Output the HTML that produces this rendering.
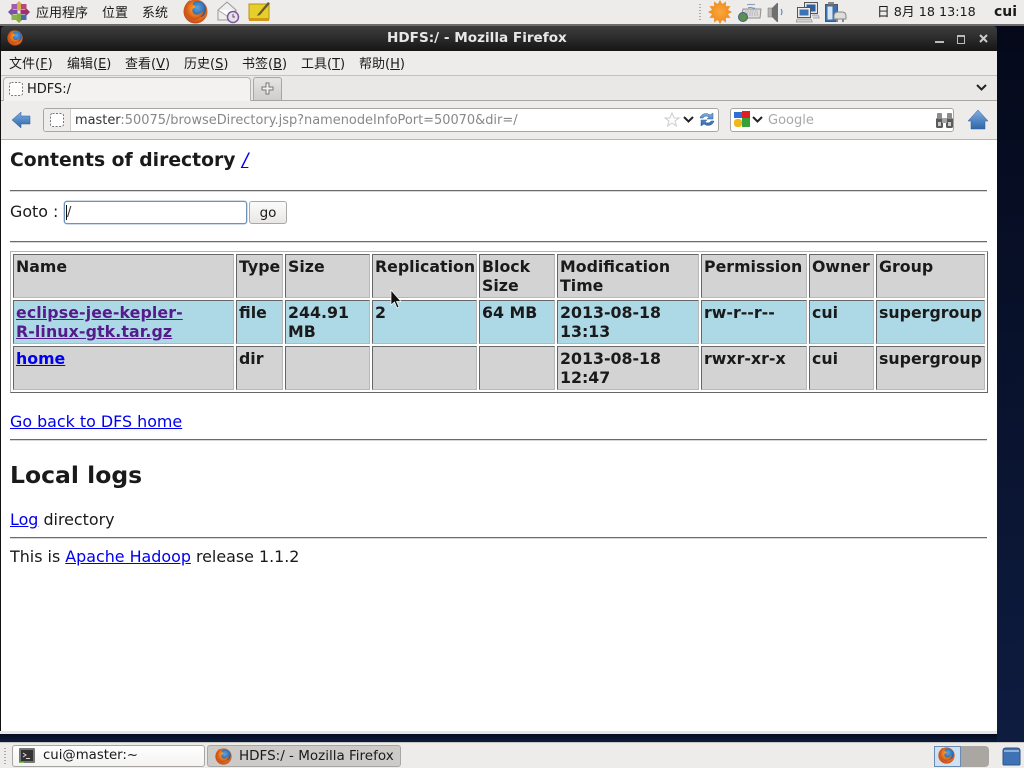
<!DOCTYPE html>
<html><head><meta charset="utf-8"><style>
html,body{margin:0;padding:0;width:1024px;height:768px;overflow:hidden;background:#0a1530}
body{position:relative;font-family:"DejaVu Sans",sans-serif;color:#1a1a1a}
.a{position:absolute;white-space:nowrap}
.cjk{font-family:"DejaVu Sans","WenQuanYi Zen Hei","Noto Sans CJK SC",sans-serif;font-size:13px;color:#1a1a1a}
.m{font-family:"DejaVu Sans","WenQuanYi Zen Hei","Noto Sans CJK SC",sans-serif;font-size:13px;color:#1a1a1a;top:53px}
.c{position:absolute;box-sizing:border-box;border:1px solid;border-color:#666 #b8b8b8 #b8b8b8 #666;background:#d3d3d3;padding:2px 0 0 2px;font-size:15.800px;font-weight:bold;line-height:19px;color:#1a1a1a;white-space:nowrap}
.b{background:#add8e6}
a{color:#0000ee;text-decoration:underline}
.hr{position:absolute;left:10px;width:977px;height:2px;background:linear-gradient(#6a6a6a 50%,#d8d8d8 50%)}
.t{position:absolute;font-size:15.900px;line-height:19px;white-space:nowrap;color:#1a1a1a}
svg{position:absolute;overflow:visible}
.r1{top:254px;height:44px}.r2{top:300px;height:44px}.r3{top:346px;height:44px}
.k1{left:13px;width:221px}.k2{left:236px;width:47px}.k3{left:285px;width:85px}.k4{left:372px;width:105px}.k5{left:479px;width:76px}.k6{left:557px;width:142px}.k7{left:701px;width:106px}.k8{left:809px;width:65px}.k9{left:876px;width:109px}
</style></head><body>
<svg width="0" height="0" style="position:absolute"><defs>
<radialGradient id="fo" cx=".55" cy=".45" r=".6"><stop offset="0" stop-color="#f7b23a"/><stop offset=".6" stop-color="#e8701c"/><stop offset="1" stop-color="#b8421a"/></radialGradient>
<radialGradient id="fb" cx=".5" cy=".4" r=".6"><stop offset="0" stop-color="#5fa4dc"/><stop offset="1" stop-color="#1a55a0"/></radialGradient>
<radialGradient id="sun" cx=".5" cy=".5" r=".5"><stop offset="0" stop-color="#fba83a"/><stop offset="1" stop-color="#f08c22"/></radialGradient>
<linearGradient id="bl" x1="0" y1="0" x2="0" y2="1"><stop offset="0" stop-color="#7faee0"/><stop offset="1" stop-color="#2f66a8"/></linearGradient>
<symbol id="ff" viewBox="0 0 24 24"><circle cx="12" cy="12" r="11.500" fill="url(#fo)"/><circle cx="14" cy="10" r="8.200" fill="url(#fb)"/><path d="M2 7C3 4 5 2 7 1c-.5 1.500-.3 2.500.3 3.300C8.500 3 10 2.300 12 2c-2 1-2.800 2.300-2.600 3.500 1 .8 2.600.8 3 2-.8 1.300-2.900 1.300-3.400 2.500-.5 2.500 1 5 4 5 2.500 0 5-1.500 6.800-4-.3 5-4.800 9.500-9.800 9C6 19 3 15 3 11c0-1.500-.5-3-1-4z" fill="url(#fo)"/></symbol>
<symbol id="dash" viewBox="0 0 14 14"><rect x=".5" y=".5" width="13" height="13" rx="2" fill="#fff" stroke="#777" stroke-dasharray="2 1.500"/></symbol>
</defs></svg>

<!-- top panel -->
<div class="a" style="left:0;top:0;width:1024px;height:24px;background:#edecea"></div>
<div class="a" style="left:0;top:24px;width:1024px;height:2px;background:#6e6c6a"></div>
<svg style="left:8px;top:1px" width="22" height="22" viewBox="0 0 22 22">
<path d="M11 0l3.500 3.500-1.500 1.500v4.500h-4V5L7.500 3.500z" fill="#d8ac50"/>
<path d="M22 11l-3.500 3.500-1.500-1.500h-4.500V9H17l1.500-1.500z" fill="#a2306a"/>
<path d="M11 22l-3.500-3.500 1.500-1.500v-4.500h4V17l1.500 1.500z" fill="#86ac3e"/>
<path d="M0 11l3.500-3.500L5 9h4.500v4H5l-1.500 1.500z" fill="#7f4ea6"/>
<rect x="3.500" y="3" width="5.500" height="5.500" fill="#a35aa8"/><rect x="13" y="3" width="5.500" height="5.500" fill="#b44a78"/>
<rect x="3.500" y="13.500" width="5.500" height="5.500" fill="#8bb24e"/><rect x="13" y="13.500" width="5.500" height="5.500" fill="#4d68ac"/>
</svg>
<div class="a cjk" style="left:36px;top:2px">应用程序</div>
<div class="a cjk" style="left:102px;top:2px">位置</div>
<div class="a cjk" style="left:142px;top:2px">系统</div>
<svg style="left:183px;top:-1px" width="25" height="25"><use href="#ff" width="25" height="25"/></svg>
<svg style="left:217px;top:1px" width="23" height="22" viewBox="0 0 23 22"><path d="M1 9l9-8 9 8v10H1z" fill="#eee" stroke="#999"/><path d="M1 9l9 6 9-6" fill="#fff" stroke="#aaa"/><circle cx="16" cy="16" r="5.500" fill="#e6e0ea" stroke="#80589a" stroke-width="1.500"/><path d="M16 13v3h2" stroke="#555" fill="none"/></svg>
<svg style="left:249px;top:1px" width="22" height="21" viewBox="0 0 22 21"><rect x="0" y="3" width="20" height="15" fill="#e6cf2a" stroke="#b8960c"/><rect x="0" y="17" width="20" height="3" fill="#d19a14"/><path d="M9 13L19 1l2 1.500L11 14l-3 1z" fill="#6a5a30"/></svg>

<svg style="left:699px;top:3px" width="3" height="18"><path d="M1 1v16" stroke="#aaa" stroke-width="2" stroke-dasharray="1 2"/></svg>
<svg style="left:709px;top:1px" width="22" height="22" viewBox="0 0 22 22"><path d="M11 0L12.940 3.760 16.500 1.470 16.300 5.700 20.530 5.500 18.240 9.060 22 11 18.240 12.940 20.530 16.500 16.300 16.300 16.500 20.530 12.940 18.240 11 22 9.060 18.240 5.500 20.530 5.700 16.300 1.470 16.500 3.760 12.940 0 11 3.760 9.060 1.470 5.500 5.700 5.700 5.500 1.470 9.060 3.760z" fill="url(#sun)" stroke="#f0902a" stroke-width="1"/></svg>
<svg style="left:738px;top:2px" width="24" height="20" viewBox="0 0 24 20"><path d="M5 7h18l-1 9H3z" fill="#dcdcdc" stroke="#8f8f8f"/><path d="M7 9h13M6 11h14M6 13h14" stroke="#aaa" stroke-dasharray="1.500 1"/><path d="M9 3c3-2 5 1 8-1M10 6c3-2 5 1 7 0" stroke="#7a94b8" fill="none"/><circle cx="5" cy="15" r="4.500" fill="#5f8f4e" stroke="#3c5f88"/></svg>
<svg style="left:768px;top:2px" width="16" height="20" viewBox="0 0 16 20"><rect x="0" y="6" width="4" height="9" fill="#b5b5b5" stroke="#777" stroke-width=".5"/><path d="M4 6l5-5h1v19H9l-5-5z" fill="#6f6f6f"/><path d="M13 7q2 3 0 6" stroke="#4a78b8" fill="none"/></svg>
<svg style="left:796px;top:1px" width="24" height="23" viewBox="0 0 24 23"><rect x="8.500" y="1.500" width="13" height="11" fill="#e4e7ea" stroke="#555"/><rect x="10.500" y="3.500" width="9" height="7" fill="#2e5f9e"/><rect x="1.500" y="6.500" width="13" height="10" fill="#ececec" stroke="#555"/><rect x="3.500" y="8.500" width="9" height="6" fill="#3a72b4"/><path d="M1 18h14l1.500 3H0z" fill="#d5d5d5" stroke="#777" stroke-width=".5"/><path d="M16 14h6l1.500 3H17" fill="#d5d5d5" stroke="#777" stroke-width=".5"/></svg>
<svg style="left:825px;top:2px" width="22" height="21" viewBox="0 0 22 21"><rect x=".5" y="2.500" width="12" height="17" fill="#3e70ae" stroke="#555"/><rect x="2.500" y="4.500" width="5" height="13" fill="#d8e5f3"/><rect x="3" y="0" width="6" height="2.500" fill="#888"/><path d="M9 14q0-4 4-4h4q4 0 4 4v3H9z" fill="#ddd" stroke="#888"/><path d="M12 17v3M18 17v3" stroke="#888" stroke-width="2"/></svg>
<div class="a" style="left:877px;top:1px;font:12.750px 'DejaVu Sans','WenQuanYi Zen Hei','Noto Sans CJK SC',sans-serif;color:#1a1a1a">日 8月 18 13:18</div>
<div class="a" style="left:994px;top:4px;font:bold 14px 'DejaVu Sans',sans-serif;color:#1a1a1a">cui</div>

<!-- window -->
<div class="a" style="left:1px;top:26px;width:996px;height:25px;background:linear-gradient(#3d3d3d,#2b2b2b 50%,#151515);border-radius:4px 4px 0 0"></div>
<div class="a" style="left:0;top:26px;width:1px;height:708px;background:#111"></div>
<svg style="left:7px;top:30px" width="16" height="16"><use href="#ff" width="16" height="16"/></svg>
<div class="a" style="left:387px;top:30px;font:bold 13.600px 'DejaVu Sans',sans-serif;color:#e8e8e8">HDFS:/ - Mozilla Firefox</div>
<div class="a" style="left:935px;top:41px;width:9px;height:2px;background:#bbb"></div>
<div class="a" style="left:957px;top:35px;width:6px;height:6px;border:1.500px solid #bbb;border-top-width:2px"></div>
<svg style="left:979px;top:34px" width="9" height="9"><path d="M1 1l7 7M8 1L1 8" stroke="#ccc" stroke-width="2"/></svg>

<div class="a" style="left:1px;top:51px;width:996px;height:680px;background:#fff"></div>
<div class="a" style="left:1px;top:51px;width:996px;height:24px;background:#edecea;border-bottom:1px solid #c4c2bf"></div>
<div class="a m" style="left:9px">文件(<u>F</u>)</div>
<div class="a m" style="left:67px">编辑(<u>E</u>)</div>
<div class="a m" style="left:125px">查看(<u>V</u>)</div>
<div class="a m" style="left:184px">历史(<u>S</u>)</div>
<div class="a m" style="left:242px">书签(<u>B</u>)</div>
<div class="a m" style="left:301px">工具(<u>T</u>)</div>
<div class="a m" style="left:359px">帮助(<u>H</u>)</div>

<!-- tab bar -->
<div class="a" style="left:1px;top:76px;width:996px;height:24px;background:#e9e8e6;border-bottom:1px solid #a8a6a3"></div>
<div class="a" style="left:3px;top:77px;width:246px;height:24px;background:#f3f2f1;border:1px solid #b5b3b0;border-bottom:0;border-radius:4px 4px 0 0"></div>
<svg style="left:9px;top:82px" width="14" height="14"><use href="#dash" width="14" height="14"/></svg>
<div class="a" style="left:27px;top:82px;font-size:13px;line-height:15px;color:#1a1a1a">HDFS:/</div>
<div class="a" style="left:253px;top:77px;width:27px;height:22px;background:linear-gradient(#e6e5e3,#cfcdca);border:1px solid #a8a6a3;border-bottom:0;border-radius:3px 3px 0 0"></div>
<svg style="left:261px;top:82px" width="14" height="13"><path d="M5 1h3v4h4v3H8v4H5V8H1V5h4z" fill="#efefef" stroke="#777"/></svg>
<svg style="left:976px;top:84px" width="11" height="7"><path d="M1 1l4.500 4.500L10 1" stroke="#222" stroke-width="2" fill="none"/></svg>

<!-- nav bar -->
<div class="a" style="left:1px;top:101px;width:996px;height:38px;background:#edecea;border-bottom:1px solid #b8b6b3"></div>
<svg style="left:12px;top:111px" width="20" height="19" viewBox="0 0 20 19"><path d="M0 9l9-8v4h9v8H9v4z" fill="url(#bl)" stroke="#2b5f9a" stroke-width=".5"/></svg>
<div class="a" style="left:43px;top:108px;width:674px;height:22px;background:#fff;border:1px solid #a8a6a3;border-radius:3px"></div>
<div class="a" style="left:44px;top:109px;width:26px;height:22px;background:#edecea;border-right:1px solid #ccc;border-radius:3px 0 0 3px"></div>
<svg style="left:50px;top:113px" width="14" height="14"><use href="#dash" width="14" height="14"/></svg>
<div class="a" style="left:75px;top:112px;font-size:12.950px;line-height:16px;color:#888;padding-top:1px">
<span style="color:#333">master</span>:50075/browseDirectory.jsp?namenodeInfoPort=50070&amp;dir=/</div>
<svg style="left:664px;top:112px" width="16" height="15"><path d="M8 1l2 5h5l-4 3 1.500 5L8 11l-4.500 3L5 9 1 6h5z" fill="#fff" stroke="#ccc"/></svg>
<svg style="left:683px;top:116px" width="11" height="7"><path d="M1 1l4.500 4.500L10 1" stroke="#222" stroke-width="2" fill="none"/></svg>
<svg style="left:699px;top:111px" width="16" height="17" viewBox="0 0 16 17"><path d="M1 7c1-4 6-6 10-3l3-2v6H8l2-2c-2-1.500-5-1-6 1zM15 10c-1 4-6 6-10 3l-3 2V9h6l-2 2c2 1.500 5 1 6-1z" fill="url(#bl)" stroke="#2b5f9a" stroke-width=".5"/></svg>
<div class="a" style="left:730px;top:108px;width:222px;height:22px;background:#fff;border:1px solid #a8a6a3;border-radius:3px"></div>
<svg style="left:734px;top:111px" width="16" height="17" viewBox="0 0 16 17"><rect x="0" y="1" width="8" height="6" fill="#2f6fd0"/><rect x="8" y="0" width="8" height="7" fill="#e02020"/><rect x="8" y="7" width="8" height="9" fill="#38a038"/><rect x="0" y="8" width="8" height="8" rx="3" fill="#f2b51a"/></svg>
<svg style="left:752px;top:116px" width="11" height="7"><path d="M1 1l4.500 4.500L10 1" stroke="#222" stroke-width="2" fill="none"/></svg>
<div class="a" style="left:768px;top:113px;font-size:13px;line-height:16px;color:#a8a8a8">Google</div>
<svg style="left:936px;top:113px" width="17" height="15" viewBox="0 0 17 15"><rect x="0" y="5" width="7" height="10" rx="1.500" fill="#5a5a5a"/><rect x="10" y="5" width="7" height="10" rx="1.500" fill="#5a5a5a"/><rect x="1" y="0" width="5" height="6" rx="1" fill="#8c8c8c"/><rect x="11" y="0" width="5" height="6" rx="1" fill="#8c8c8c"/><rect x="6" y="5" width="5" height="5" fill="#a5a5a5"/><rect x="2" y="9" width="3" height="4" fill="#c9c9c9"/><rect x="12" y="9" width="3" height="4" fill="#c9c9c9"/></svg>
<svg style="left:968px;top:110px" width="20" height="20" viewBox="0 0 20 20"><path d="M10 0L0 11h3v8h14v-8h3z" fill="url(#bl)" stroke="#2b5f9a" stroke-width=".5"/></svg>

<!-- content -->
<div class="a" style="left:10px;top:149px;font-size:18.750px;line-height:23px;font-weight:bold;color:#1a1a1a">Contents of directory <a href="#" style="font-weight:normal;font-style:italic">/</a></div>
<div class="hr" style="top:190px"></div>
<div class="t" style="left:10px;top:202px">Goto :</div>
<div class="a" style="left:64px;top:201px;width:181px;height:21px;border:1px solid #6f92b8;border-radius:3px;background:#fff;box-shadow:0 0 0 .5px #9fb8d4"></div>
<div class="a" style="left:67px;top:205px;font-size:13px;color:#333">/</div>
<div class="a" style="left:66px;top:205px;width:1px;height:15px;background:#111"></div>
<div class="a" style="left:249px;top:201px;width:38px;height:23px;box-sizing:border-box;border:1px solid #aaa8a5;border-radius:3px;background:linear-gradient(#fbfbfb,#e8e7e5);text-align:center;font-size:13.500px;line-height:22px;color:#1a1a1a">go</div>
<div class="hr" style="top:241px"></div>

<div class="a" style="left:10px;top:251px;width:978px;height:142px;box-sizing:border-box;border:1px solid;border-color:#b4b4b4 #666 #666 #b4b4b4"></div>
<div class="c k1 r1">Name</div>
<div class="c k2 r1">Type</div>
<div class="c k3 r1">Size</div>
<div class="c k4 r1">Replication</div>
<div class="c k5 r1">Block<br>Size</div>
<div class="c k6 r1">Modification<br>Time</div>
<div class="c k7 r1">Permission</div>
<div class="c k8 r1">Owner</div>
<div class="c k9 r1">Group</div>

<div class="c b k1 r2"><a href="#" style="color:#551a8b;letter-spacing:.1px">eclipse-jee-kepler-<br>R-linux-gtk.tar.gz</a></div>
<div class="c b k2 r2">file</div>
<div class="c b k3 r2">244.91<br>MB</div>
<div class="c b k4 r2">2</div>
<div class="c b k5 r2">64 MB</div>
<div class="c b k6 r2">2013-08-18<br>13:13</div>
<div class="c b k7 r2">rw-r--r--</div>
<div class="c b k8 r2">cui</div>
<div class="c b k9 r2">supergroup</div>

<div class="c k1 r3"><a href="#">home</a></div>
<div class="c k2 r3">dir</div>
<div class="c k3 r3"></div>
<div class="c k4 r3"></div>
<div class="c k5 r3"></div>
<div class="c k6 r3">2013-08-18<br>12:47</div>
<div class="c k7 r3">rwxr-xr-x</div>
<div class="c k8 r3">cui</div>
<div class="c k9 r3">supergroup</div>

<svg style="left:390px;top:290px" width="12" height="20" viewBox="0 0 12 20"><path d="M1 0v15l3.500-3 2.500 6 2-1-2.500-5.500H11z" fill="#111" stroke="#fff" stroke-width=".7"/></svg>

<div class="t" style="left:10px;top:412px"><a href="#">Go back to DFS home</a></div>
<div class="hr" style="top:439px"></div>
<div class="a" style="left:10px;top:461px;font-size:23.500px;line-height:28px;font-weight:bold;color:#1a1a1a">Local logs</div>
<div class="t" style="left:10px;top:510px"><a href="#">Log</a> directory</div>
<div class="hr" style="top:537px"></div>
<div class="t" style="left:10px;top:547px">This is <a href="#">Apache Hadoop</a> release 1.1.2</div>

<!-- window bottom -->
<div class="a" style="left:0;top:731px;width:997px;height:3px;background:#e8e6e4"></div>
<div class="a" style="left:0;top:734px;width:1024px;height:8px;background:linear-gradient(#050c20,#0c1a3c)"></div>
<div class="a" style="left:997px;top:52px;width:27px;height:690px;background:linear-gradient(#050a1c,#0e1c40)"></div>
<div class="a" style="left:997px;top:26px;width:27px;height:26px;background:#05091a"></div>

<!-- bottom panel -->
<div class="a" style="left:0;top:742px;width:1024px;height:26px;background:#edecea;border-top:1px solid #c8c6c3;box-sizing:border-box"></div>
<svg style="left:4px;top:747px" width="3" height="18"><path d="M1 1v16" stroke="#aaa" stroke-width="2" stroke-dasharray="1 2"/></svg>
<div class="a" style="left:12px;top:745px;width:191px;height:20px;background:linear-gradient(#fff,#f4f3f2);border:1px solid #a8a6a3;border-radius:3px"></div>
<svg style="left:19px;top:748px" width="16" height="16"><rect x="0" y="0" width="16" height="15" rx="1" fill="#777"/><rect x="2" y="2" width="12" height="11" fill="#333"/><path d="M4 5l3 2-3 2" stroke="#ddd" fill="none"/><rect x="7" y="10" width="4" height="1" fill="#ddd"/><rect x="1" y="14" width="4" height="1" fill="#7c4"/></svg>
<div class="a" style="left:43px;top:747px;font-size:13.300px;line-height:17px;color:#1a1a1a">cui@master:~</div>
<div class="a" style="left:207px;top:745px;width:192px;height:20px;background:#cdcbc8;border:1px solid #a8a6a3;border-radius:3px"></div>
<svg style="left:215px;top:748px" width="17" height="17"><use href="#ff" width="17" height="17"/></svg>
<div class="a" style="left:239px;top:748px;font-size:13.500px;line-height:17px;color:#1a1a1a">HDFS:/ - Mozilla Firefox</div>
<div class="a" style="left:961px;top:746px;width:28px;height:21px;background:#aaa7a2;border-radius:0 4px 4px 0"></div>
<div class="a" style="left:934px;top:746px;width:25px;height:19px;background:#cfe0f2;border:1px solid #6a8ab0"></div>
<svg style="left:938px;top:747px" width="17" height="17"><use href="#ff" width="17" height="17"/></svg>
<svg style="left:1002px;top:747px" width="19" height="19" viewBox="0 0 19 19"><path d="M1 4q0-3 3-3h11q3 0 3 3v13q0 1-1 1H2q-1 0-1-1z" fill="#3f72b4" stroke="#2a5488"/><rect x="2" y="3" width="15" height="2" fill="#8fb0d8"/></svg>
</body></html>
